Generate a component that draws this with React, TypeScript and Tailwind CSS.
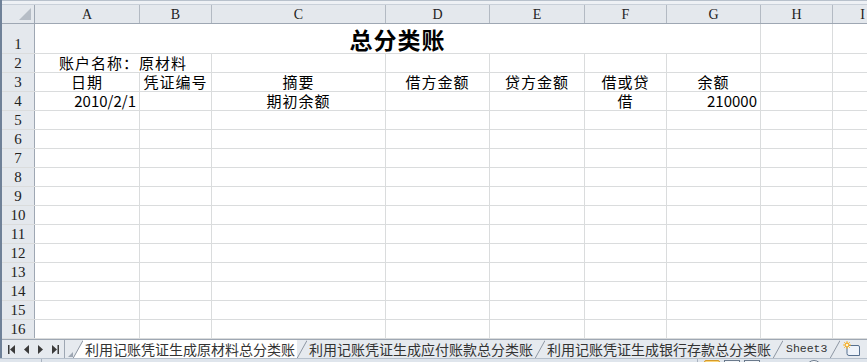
import clsx from 'clsx';

type Cell = { t: string; align?: 'l' | 'c' | 'r'; cjk?: boolean };

const cols = [
  { k: 'A', w: 'w-[105px]' },
  { k: 'B', w: 'w-[72px]' },
  { k: 'C', w: 'w-[174px]' },
  { k: 'D', w: 'w-[104px]' },
  { k: 'E', w: 'w-[95px]' },
  { k: 'F', w: 'w-[82px]' },
  { k: 'G', w: 'w-[94px]' },
  { k: 'H', w: 'w-[72px]' },
  { k: 'I', w: 'w-[60px]' },
];

const data: Record<number, Record<string, Cell>> = {
  2: { A: { t: '账户名称：原材料', align: 'l', cjk: true } },
  3: {
    A: { t: '日期', align: 'c', cjk: true },
    B: { t: '凭证编号', align: 'c', cjk: true },
    C: { t: '摘要', align: 'c', cjk: true },
    D: { t: '借方金额', align: 'c', cjk: true },
    E: { t: '贷方金额', align: 'c', cjk: true },
    F: { t: '借或贷', align: 'c', cjk: true },
    G: { t: '余额', align: 'c', cjk: true },
  },
  4: {
    A: { t: '2010/2/1', align: 'r' },
    C: { t: '期初余额', align: 'c', cjk: true },
    F: { t: '借', align: 'c', cjk: true },
    G: { t: '210000', align: 'r' },
  },
};

// cells whose text runs over the gridline on their right
const overflow: Record<number, string[]> = { 2: ['A'] };

const cjkFont = "font-['Noto_Sans_CJK_SC',sans-serif]";
const serifFont = "font-['Liberation_Serif',serif]";

function RowHeader({ n, tall }: { n: number; tall?: boolean }) {
  return (
    <div
      className={clsx(
        'w-[33px] shrink-0 border-r border-[#9ea7b3] bg-[#e4e8ed] flex items-end justify-center text-[15px] leading-[18px] text-[#222]',
        serifFont,
        tall ? 'h-[29px]' : 'h-[18px]'
      )}
    >
      {n}
    </div>
  );
}

function SheetRow({ n }: { n: number }) {
  const row = data[n] || {};
  const over = overflow[n] || [];
  return (
    <div className="flex h-[19px] border-b border-[#dadcdd]">
      <RowHeader n={n} />
      {cols.map((c) => {
        const cell = row[c.k];
        return (
          <div
            key={c.k}
            className={clsx(
              'shrink-0 h-[18px] flex items-end px-[3px] text-[15px] leading-[18px] text-black whitespace-nowrap',
              c.w,
              cjkFont,
              !over.includes(c.k) && 'border-r border-[#dadcdd]',
              over.includes(c.k) && 'overflow-visible',
              cell?.align === 'c' && 'justify-center',
              cell?.align === 'r' && 'justify-end',
              cell?.align === 'l' && 'pl-[24px]',
              cell?.cjk && 'tracking-[1px]'
            )}
          >
            {cell?.t}
          </div>
        );
      })}
    </div>
  );
}

function SheetTab({ label, active, mono }: { label: string; active?: boolean; mono?: boolean }) {
  return (
    <div className="flex h-full items-stretch shrink-0">
      <svg width="10" height="19" viewBox="0 0 10 19" className="shrink-0">
        <polygon points="0,19 10,1 10,19" fill={active ? '#ffffff' : '#e6eaef'} />
        <line x1="0" y1="18.5" x2="10" y2="0.5" stroke="#8d96a2" strokeWidth="1" />
      </svg>
      <div
        className={clsx(
          'flex items-center text-[#333] whitespace-nowrap',
          active ? 'bg-white' : 'bg-[#e6eaef]',
          mono ? "font-['Liberation_Mono',monospace] text-[11.5px] px-[3px]" : clsx(cjkFont, 'text-[14px] px-[2px]')
        )}
      >
        {label}
      </div>
    </div>
  );
}

export default function App() {
  const rows = Array.from({ length: 15 }, (_, i) => i + 2);
  return (
    <div className="w-[867px] h-[362px] overflow-hidden bg-white">
      <div className="border-l-2 border-[#6f8198]">
        {/* top edge of formula area */}
        <div className="h-[5px] bg-[#eef1f5] border-t border-[#b8c1cc] border-b border-b-[#c9d0d9]" />

        {/* column headers */}
        <div className="flex h-[19px] border-b border-[#9ea7b3] bg-[#e4e8ed]">
          <div className="w-[33px] shrink-0 border-r border-[#9ea7b3] relative">
            <svg width="12" height="12" viewBox="0 0 12 12" className="absolute right-[3px] bottom-[3px]">
              <polygon points="12,0 12,12 0,12" fill="#b6bdc6" />
            </svg>
          </div>
          {cols.map((c) => (
            <div
              key={c.k}
              className={clsx(
                'shrink-0 h-full border-r border-[#b3bac3] flex items-center justify-center text-[14px] text-[#222]',
                c.w,
                serifFont
              )}
            >
              {c.k}
            </div>
          ))}
        </div>

        {/* row 1 with merged title */}
        <div className="flex h-[30px] border-b border-[#dadcdd]">
          <RowHeader n={1} tall />
          <div
            className={clsx(
              'w-[726px] shrink-0 h-[29px] border-r border-[#dadcdd] flex items-end justify-center pb-[1px] text-[23px] leading-[26px] font-bold text-black tracking-[1px]',
              cjkFont
            )}
          >
            总分类账
          </div>
          <div className="w-[72px] shrink-0 h-[29px] border-r border-[#dadcdd]" />
        </div>

        {rows.map((n) => (
          <SheetRow key={n} n={n} />
        ))}

        {/* sheet tabs */}
        <div className="flex h-[19px] bg-[#e6eaef] border-t border-[#9ea7b3] overflow-hidden">
          <div className="flex items-center gap-[9px] pl-[6px] w-[62px] shrink-0 text-[#3a3a3a]">
            <svg width="7" height="9" viewBox="0 0 7 9">
              <rect x="0" y="0" width="1.5" height="9" fill="currentColor" />
              <polygon points="7,0 7,9 2,4.5" fill="currentColor" />
            </svg>
            <svg width="5" height="9" viewBox="0 0 5 9">
              <polygon points="5,0 5,9 0,4.5" fill="currentColor" />
            </svg>
            <svg width="5" height="9" viewBox="0 0 5 9">
              <polygon points="0,0 0,9 5,4.5" fill="currentColor" />
            </svg>
            <svg width="7" height="9" viewBox="0 0 7 9">
              <polygon points="0,0 0,9 5,4.5" fill="currentColor" />
              <rect x="5.5" y="0" width="1.5" height="9" fill="currentColor" />
            </svg>
          </div>
          <div className="w-[9px] shrink-0 border-l border-[#9ea7b3] relative">
            <svg width="5" height="5" viewBox="0 0 5 5" className="absolute right-[0px] bottom-[1px]">
              <polygon points="5,0 5,5 0,5" fill="#9ea7b3" />
            </svg>
          </div>
          <SheetTab label="利用记账凭证生成原材料总分类账" active />
          <SheetTab label="利用记账凭证生成应付账款总分类账" />
          <SheetTab label="利用记账凭证生成银行存款总分类账" />
          <SheetTab label="Sheet3" mono />
          <div className="flex h-full items-stretch shrink-0">
            <svg width="10" height="19" viewBox="0 0 10 19">
              <line x1="0" y1="18.5" x2="10" y2="0.5" stroke="#8d96a2" strokeWidth="1" />
            </svg>
            <svg width="20" height="19" viewBox="0 0 20 19" className="ml-[2px]">
              <path d="M5 5.5 H16 Q17.5 5.5 17.5 7 V15.5 H7 Q5 15.5 5 13.5 Z" fill="#eef3fa" stroke="#56708f" strokeWidth="1" />
              <circle cx="5" cy="5" r="2.4" fill="#f0a020" />
              <path d="M5 1 V9 M1 5 H9 M2.2 2.2 L7.8 7.8 M7.8 2.2 L2.2 7.8" stroke="#f7b733" strokeWidth="1" />
              <circle cx="5" cy="5" r="1.3" fill="#fff4d6" />
            </svg>
          </div>
        </div>
      </div>

      {/* status bar, mostly below the window */}
      <div className={clsx('flex h-[24px] bg-[#dfe5ec] border-t border-[#b5bfcb] text-[13px] text-[#222]', cjkFont)}>
        <div className="w-[42px] shrink-0 pl-[10px] pt-[1px] border-r border-[#a9b3c0]">就绪</div>
        <div className="flex-1" />
        <div className="flex items-start gap-[4px] pt-[1px] pl-[6px] border-l border-[#a9b3c0]">
          <div className="w-[16px] h-[16px] rounded-[2px] border border-[#d59a2a] bg-[#fbd67b]" />
          <div className="w-[16px] h-[16px] border border-[#6b7a8c] bg-[#f4f6f9]" />
          <div className="w-[16px] h-[16px] border border-[#6b7a8c] bg-[#f4f6f9]" />
        </div>
        <div className="pl-[10px] pt-[1px] w-[46px]">100%</div>
        <div className="pt-[1px] pr-[45px]">
          <div className="w-[16px] h-[16px] rounded-full border border-[#6b7a8c] bg-white" />
        </div>
      </div>
    </div>
  );
}
